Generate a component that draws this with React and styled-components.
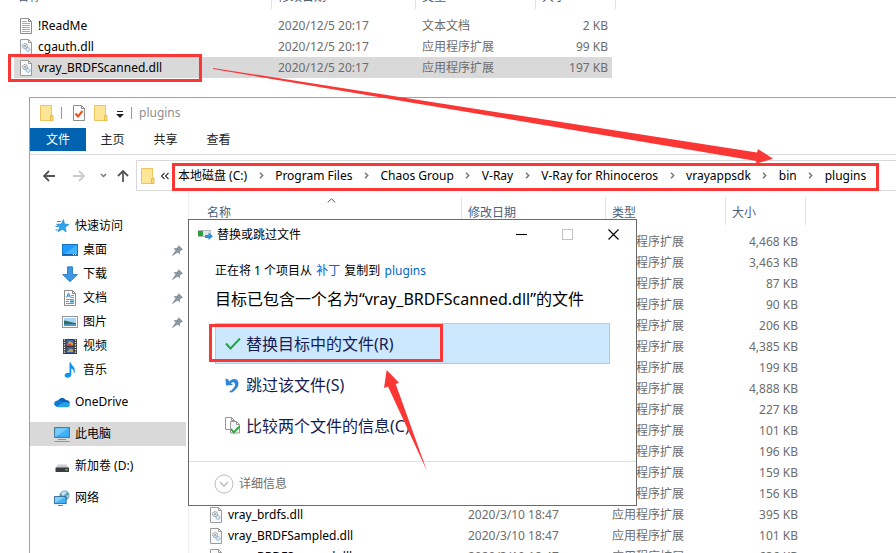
import React from 'react';
import styled, { createGlobalStyle, css } from 'styled-components';

const RED = '#fb3735';

const GlobalStyle = createGlobalStyle`
  * { box-sizing: border-box; }
  body {
    margin: 0;
    background: #fff;
    color: #000;
    font: 12px/20px "Noto Sans", "Noto Sans CJK SC", sans-serif;
  }
  button {
    padding: 0;
    border: 0;
    background: none;
    color: inherit;
    font: inherit;
    text-align: left;
    white-space: nowrap;
  }
  a { text-decoration: none; }
  svg { display: block; flex: none; }
`;

const Desktop = styled.div`
  position: relative;
  height: 100vh;
  overflow: hidden;
`;

/* ---------- icons ---------- */

const FolderIcon = () => (
  <svg width="14" height="16" viewBox="0 0 14 16">
    <path d="M.5.5h11v15H.5z" fill="#ffe596" stroke="#ecc65c" />
    <path d="M10.500 10.500h2.500v5h-2.500z" fill="#ffdb78" stroke="#e6ba48" />
  </svg>
);

const TextFileIcon = () => (
  <svg width="12" height="16" viewBox="0 0 12 16">
    <path d="M.5.5h8l3 3v12H.5z" fill="#fff" stroke="#8d8d8d" />
    <path d="M8.500.5v3h3" fill="none" stroke="#8d8d8d" />
    <path d="M2 3.500h5M2 5.500h8M2 7.500h8M2 9.500h8M2 11.500h8M2 13.500h8" stroke="#a9a9a9" />
  </svg>
);

const DllIcon = () => (
  <svg width="12" height="16" viewBox="0 0 12 16">
    <path d="M.5.5h8l3 3v12H.5z" fill="#fafafa" stroke="#9a9a9a" />
    <path d="M8.500.5v3h3" fill="none" stroke="#9a9a9a" />
    <circle cx="5" cy="7" r="2.500" fill="#dfe3e6" stroke="#87919a" strokeDasharray="1.500 .6" />
    <circle cx="5" cy="7" r=".8" fill="#6d7880" />
    <circle cx="8" cy="10.500" r="2" fill="#d4e8f5" stroke="#7fa9c6" strokeDasharray="1.300 .5" />
  </svg>
);

const PropertiesIcon = () => (
  <svg width="13" height="16" viewBox="0 0 13 16">
    <path d="M.5.5h8l3 3v12H.5z" fill="#fbfbfb" stroke="#8d8d8d" />
    <path d="M8.500.5v3h3" fill="none" stroke="#8d8d8d" />
    <path d="M2.500 8.500l2.500 3L9.500 6" fill="none" stroke="#e8501e" strokeWidth="2" />
  </svg>
);

const CustomizeIcon = () => (
  <svg width="8" height="9" viewBox="0 0 8 9">
    <path d="M1 2.500h6" stroke="#222" />
    <path d="M0 5h8L4 9z" fill="#222" />
  </svg>
);

const ArrowIcon = ({ d, color }) => (
  <svg width="14" height="14" viewBox="0 0 14 14">
    <path d={d} fill="none" stroke={color} strokeWidth="1.800" />
  </svg>
);

const SmallChevron = ({ down }) => (
  <svg width="7" height="7" viewBox="0 0 7 7">
    <path d={down ? 'M1 2l2.500 2.500L6 2' : 'M2 .8l2.700 2.700L2 6.200'} fill="none" stroke="#777" strokeWidth="1.500" />
  </svg>
);

const DoubleChevron = () => (
  <svg width="8" height="8" viewBox="0 0 8 8">
    <path d="M3.500 1l-3 3 3 3M7.500 1l-3 3 3 3" fill="none" stroke="#333" strokeWidth="1.100" />
  </svg>
);

const SortCaret = () => (
  <svg width="9" height="5" viewBox="0 0 9 5">
    <path d="M.7 4.500l3.800-3.700 3.800 3.700" fill="none" stroke="#555" />
  </svg>
);

const PinIcon = () => (
  <svg width="11" height="11" viewBox="0 0 11 11">
    <path d="M6.500 0L11 4.500 9.600 5 8 6.600 8 9.500 5.600 7.500.5 11 0 10.500 3.500 5.500 1.500 3.300 4.500 3 6.300 1.400z" fill="#8c969f" />
  </svg>
);

const sideIcons = {
  star: (
    <>
      <path d="M9.500 1.500l1 4.500 4.500.5-3.800 2.700 1 4.800-3.800-2.700-4.300 2.500 1.600-4.600L2.500 6.300l4.800-.3z" fill="#2ea3ee" stroke="#1581cc" strokeWidth=".6" />
      <path d="M3 3.500h4M1.500 8.500h3M1.500 12h3" stroke="#2b93dc" />
    </>
  ),
  desktop: (
    <>
      <rect x=".5" y="2.500" width="15" height="11" fill="#1e9bfb" stroke="#1374c4" />
      <path d="M1 13L15 3v10z" fill="#43b3ff" />
      <path d="M1 12.500h14" stroke="#0f5fa6" />
      <path d="M11 12.500h3" stroke="#fff" strokeDasharray="1 1" />
    </>
  ),
  download: <path d="M5.500.8h5v7.700h5L8 15.700.6 8.500h4.900z" fill="#3b97e6" stroke="#2273bd" strokeWidth=".8" />,
  document: (
    <>
      <path d="M2.500.5h8l3 3v12h-11z" fill="#fff" stroke="#8b8b8b" />
      <path d="M10.500.5v3h3" fill="none" stroke="#8b8b8b" />
      <path d="M4.500 7.500l2-4.500 2 4.500M5 6h3" fill="none" stroke="#2884cf" />
      <path d="M9 5.500h3M9 7.500h3M4 9.500h8M4 11.500h3M4 13.500h8" stroke="#7f96aa" />
      <path d="M8 10.500h4v2H8z" fill="#2a91bd" />
    </>
  ),
  picture: (
    <>
      <rect x=".5" y="2.500" width="15" height="11" fill="#fff" stroke="#8f979d" />
      <rect x="2" y="4" width="12" height="8" fill="#a9d7f5" />
      <path d="M2 6.500c4 0 7 2.500 12 2.500v3H2z" fill="#2f6f63" />
      <path d="M2 10h12v2H2z" fill="#4f92c8" />
    </>
  ),
  video: (
    <>
      <rect x="1" y="1" width="14" height="15" fill="#3a3a3a" />
      <path d="M2.500 1.500v14M13.500 1.500v14" stroke="#eee" strokeWidth="1.400" strokeDasharray="1.200 1.200" />
      <rect x="4.500" y="2" width="7" height="6" fill="#4169b8" />
      <rect x="4.500" y="9" width="7" height="6" fill="#3b5ea8" />
      <path d="M5 7l2.500-4L11 5v2z" fill="#d8a13a" />
      <path d="M6 6.500h3" stroke="#d3413a" strokeWidth="1.500" />
      <path d="M5 14l3-3.500 3 1V14z" fill="#b7a14a" />
    </>
  ),
  music: (
    <path d="M7.500.5h1.300c.3 3 4.700 4.200 4 9-.2 1.200-.9 2-1.300 2.300.9-2.900-.3-4.600-2.200-5.300v6c0 2-1.800 3.200-3.700 3.200-1.700 0-3-.8-3-2.200 0-1.800 2.200-3.200 4.900-2.600z" fill="#0f94ee" />
  ),
  cloud: (
    <>
      <path d="M3.500 9.500C3 5 8.500 1.500 12 6c2 0 3.500 1 4 3l-5 3z" fill="#0a63b6" />
      <path d="M3.300 6.500c3-1 5.700.5 8.700 3L4 13C-1 12.500-1 7.500 3.300 6.500z" fill="#1178cc" />
      <path d="M2 12.500l7.500-4c1.500-.8 3-.8 4.500 0 2.700 1.200 2.500 4.800-.8 4.800H4c-1 0-1.500-.3-2-.8z" fill="#27a3ea" />
    </>
  ),
  computer: (
    <>
      <rect x=".6" y="1.600" width="14.800" height="9.800" fill="#3fb1f7" stroke="#3f7595" />
      <path d="M1.200 11V2.200h13z" fill="#77cbfb" />
      <path d="M4 13.500h8M.5 15.500h15" stroke="#7d9cb3" />
    </>
  ),
  drive: (
    <>
      <path d="M4 6.500h8.500l2 3.500h-13z" fill="#c9cccf" />
      <rect x="1.500" y="9.500" width="13.500" height="4.500" rx=".6" fill="#3a3d40" />
      <rect x="11.500" y="11" width="2" height="1.400" fill="#47e05e" />
    </>
  ),
  network: (
    <>
      <circle cx="10.500" cy="5.500" r="5" fill="#5d9fbd" />
      <path d="M7 3c2-2.500 5-2 6 0l-2 1-1 2-2-1zM12 6l3-1-1 3z" fill="#c5e2ec" />
      <rect x=".6" y="6.600" width="11.500" height="7" fill="#45b4f6" stroke="#336f94" />
      <path d="M1 13V7h10z" fill="#84d0fb" />
      <path d="M4 15.500h5" stroke="#6d8799" />
    </>
  ),
};

const SideIcon = ({ name }) => (
  <svg width="16" height="16" viewBox="0 0 16 16">{sideIcons[name]}</svg>
);

const CopyProgressIcon = () => (
  <svg width="15" height="11" viewBox="0 0 15 11">
    <rect x=".5" y="1.500" width="12" height="6" fill="#e3e6e8" stroke="#b5b9bc" />
    <rect x="0" y="2" width="5" height="5" fill="#23a53a" />
    <path d="M7 6h3.500V3.500L15 7.300 10.500 11V9H7z" fill="#2b8ede" />
  </svg>
);

const CheckIcon = () => (
  <svg width="16" height="14" viewBox="0 0 16 14">
    <path d="M1 6.500l4.500 5L15 1.500" fill="none" stroke="#22a83a" strokeWidth="2" />
  </svg>
);

const UndoIcon = () => (
  <svg width="16" height="16" viewBox="0 0 16 16">
    <path d="M.5 1.500l2.500.8 1.200 2.200C7 .8 13.500.8 13.500 6.500c0 4-3 6.500-6.500 9l-3.200-.5c4-2.500 6.200-4.800 6.200-7.500 0-2.800-2.700-2.900-4-1.200l2.200 1.700L1 8.500z" fill="#3086d6" />
  </svg>
);

const CompareIcon = () => (
  <svg width="16" height="17" viewBox="0 0 16 17">
    <path d="M.5.5h6l3 3v9h-9z" fill="#fff" stroke="#999" />
    <path d="M6.500.5v3h3" fill="none" stroke="#999" />
    <path d="M5.500 4.500h6l3 3v8.500h-9z" fill="#f4f4f4" stroke="#999" />
    <path d="M11.500 4.500v3h3" fill="none" stroke="#999" />
    <path d="M6 12l2.800 3.300L14.500 9.500" fill="none" stroke="#22a83a" strokeWidth="1.800" />
  </svg>
);

const DetailsIcon = () => (
  <svg width="20" height="20" viewBox="0 0 20 20">
    <circle cx="10" cy="10" r="9" fill="#fff" stroke="#bdbdbd" />
    <path d="M6 8l4 4 4-4" fill="none" stroke="#bdbdbd" strokeWidth="1.600" />
  </svg>
);

const CaptionIcon = ({ d, color }) => (
  <svg width="11" height="11" viewBox="0 0 11 11">
    <path d={d} fill="none" stroke={color} strokeWidth="1.100" />
  </svg>
);

/* ---------- file table ---------- */

const Table = styled.table`
  table-layout: fixed;
  width: 602px;
  border-spacing: 0;
  white-space: nowrap;

  tbody::before {
    content: "";
    display: block;
    height: 6px;
  }
`;

const Col = styled.col`
  width: ${(p) => p.$width}px;
`;

const HeadCell = styled.th`
  position: relative;
  height: 28px;
  padding: 3px 0 0 ${(p) => (p.$first ? 3 : 6)}px;
  border-right: 1px solid #e3e3e3;
  color: #4c607a;
  font-weight: 400;
  text-align: left;
`;

const CaretSlot = styled.span`
  position: absolute;
  top: 1px;
  left: 48%;
`;

const Cell = styled.td`
  height: 21px;
  padding: 0 4px 0 6px;
  line-height: 20px;
  color: ${(p) => (p.$name ? '#000' : '#6d6d6d')};
  text-align: ${(p) => (p.$size ? 'right' : 'left')};
  background-clip: padding-box;
  ${(p) => p.$size && css`border-right: 4px solid transparent;`}
  ${(p) => p.$selected && css`background-color: #d9d9d9;`}
`;

const FileName = styled.span`
  display: flex;
  align-items: center;
  gap: 6px;
`;

function FileTable({ rows, sorted }) {
  return (
    <Table>
      <colgroup>
        <Col $width={258} />
        <Col $width={144} />
        <Col $width={120} />
        <Col $width={80} />
      </colgroup>
      <thead>
        <tr>
          <HeadCell $first>
            名称
            {sorted && <CaretSlot><SortCaret /></CaretSlot>}
          </HeadCell>
          <HeadCell>修改日期</HeadCell>
          <HeadCell>类型</HeadCell>
          <HeadCell>大小</HeadCell>
        </tr>
      </thead>
      <tbody>
        {rows.map((r, i) => (
          <tr key={i}>
            <Cell $name $selected={r.selected}>
              {r.name && (
                <FileName>
                  {r.text ? <TextFileIcon /> : <DllIcon />}
                  {r.name}
                </FileName>
              )}
            </Cell>
            <Cell $selected={r.selected}>{r.date}</Cell>
            <Cell $selected={r.selected}>{r.text ? '文本文档' : '应用程序扩展'}</Cell>
            <Cell $size $selected={r.selected}>{r.size} KB</Cell>
          </tr>
        ))}
      </tbody>
    </Table>
  );
}

/* ---------- source folder window ---------- */

const SourceWindow = styled.section`
  margin-top: -19px;
  padding: 0 0 19px 14px;
`;

const sourceRows = [
  { name: '!ReadMe', date: '2020/12/5 20:17', size: '2', text: true },
  { name: 'cgauth.dll', date: '2020/12/5 20:17', size: '99' },
  { name: 'vray_BRDFScanned.dll', date: '2020/12/5 20:17', size: '197', selected: true },
];

/* ---------- explorer window ---------- */

const Explorer = styled.section`
  margin-left: 29px;
  border: solid #a0a0a0;
  border-width: 1px 0 0 1px;
  background: #fff;
`;

const TitleBar = styled.header`
  display: flex;
  align-items: center;
  height: 30px;
  padding-left: 10px;
  gap: 7px;
  color: #8f8f8f;
`;

const Separator = styled.i`
  width: 1px;
  height: 12px;
  background: #999;
`;

const QuickTools = styled.div`
  display: flex;
  align-items: center;
  gap: 8px;
  padding-left: 4px;
`;

const Ribbon = styled.nav`
  display: flex;
  height: 27px;
  padding-bottom: 3px;
  border-bottom: 1px solid #dadada;
`;

const Tab = styled.button`
  width: ${(p) => (p.$file ? 56 : 53)}px;
  height: 23px;
  text-align: center;
  line-height: 24px;
  color: ${(p) => (p.$file ? '#fff' : '#222')};
  background: ${(p) => (p.$file ? '#0063b1' : 'none')};
`;

const AddressRow = styled.div`
  display: flex;
  align-items: center;
  padding-top: 5px;
`;

const NavButtons = styled.div`
  display: flex;
  align-items: center;
  width: 106px;
  padding-left: 12px;
`;

const NavButton = styled.button`
  display: flex;
  width: ${(p) => p.$width}px;
`;

const AddressBox = styled.div`
  display: flex;
  flex: 1;
  align-items: center;
  height: 31px;
  padding-left: 4px;
  border: solid #d9d9d9;
  border-width: 1px 0 1px 1px;
`;

const Overflow = styled.button`
  margin: 0 9px 0 6px;
`;

const Crumbs = styled.ol`
  display: flex;
  margin: 0;
  padding: 0;
  list-style: none;
`;

const Crumb = styled.li`
  display: flex;
  align-items: center;
`;

const CrumbGap = styled.span`
  display: flex;
  justify-content: center;
  width: 28px;
`;

const crumbs = ['本地磁盘 (C:)', 'Program Files', 'Chaos Group', 'V-Ray', 'V-Ray for Rhinoceros', 'vrayappsdk', 'bin', 'plugins'];

const Body = styled.div`
  display: flex;
`;

const Sidebar = styled.nav`
  display: flex;
  flex: none;
  flex-direction: column;
  gap: 8px;
  width: 159px;
  padding: 23px 2px 0 0;
  border-right: 1px solid #f0f0f0;
`;

const SideGroup = styled.div`
  display: flex;
  flex-direction: column;
`;

const SideItem = styled.a`
  display: flex;
  align-items: center;
  gap: 5px;
  height: 24px;
  padding: 0 3px 0 ${(p) => (p.$nested ? 32 : 24)}px;
  color: #000;
  background: ${(p) => (p.$active ? '#d9d9d9' : 'none')};
`;

const SideLabel = styled.span`
  flex: 1;
`;

const sideGroups = [
  [
    { icon: 'star', label: '快速访问' },
    { icon: 'desktop', label: '桌面', nested: true, pinned: true },
    { icon: 'download', label: '下载', nested: true, pinned: true },
    { icon: 'document', label: '文档', nested: true, pinned: true },
    { icon: 'picture', label: '图片', nested: true, pinned: true },
    { icon: 'video', label: '视频', nested: true },
    { icon: 'music', label: '音乐', nested: true },
  ],
  [{ icon: 'cloud', label: 'OneDrive' }],
  [{ icon: 'computer', label: '此电脑', active: true }],
  [{ icon: 'drive', label: '新加卷 (D:)' }],
  [{ icon: 'network', label: '网络' }],
];

const FilePane = styled.main`
  flex: 1;
  min-width: 0;
  padding: 6px 0 0 15px;
`;

const pluginSizes = ['4,468', '3,463', '87', '90', '206', '4,385', '199', '4,888', '227', '101', '196', '159', '156'];

const pluginRows = [
  ...pluginSizes.map((size) => ({ size })),
  { name: 'vray_brdfs.dll', date: '2020/3/10 18:47', size: '395' },
  { name: 'vray_BRDFSampled.dll', date: '2020/3/10 18:47', size: '101' },
  { name: 'vray_BRDFScanned.dll', date: '2020/3/10 18:47', size: '636' },
];

/* ---------- replace dialog ---------- */

const Dialog = styled.section`
  position: absolute;
  top: 219px;
  left: 188px;
  width: 449px;
  border: 1px solid #6b6b6b;
  background: #fff;
`;

const DialogTitle = styled.header`
  display: flex;
  align-items: center;
  gap: 4px;
  height: 29px;
  padding-left: 9px;
`;

const DialogName = styled.span`
  flex: 1;
`;

const CaptionButtons = styled.div`
  display: flex;
`;

const CaptionButton = styled.button`
  display: flex;
  align-items: center;
  justify-content: center;
  width: 46px;
  height: 29px;
`;

const DialogBody = styled.div`
  padding: 12px 26px 15px;
`;

const Summary = styled.p`
  margin: 0;
`;

const Link = styled.a`
  margin: 0 1px;
  color: #0066cc;
`;

const Heading = styled.h1`
  margin: 5px 0 11px;
  font-size: 16px;
  font-weight: 400;
  line-height: 26px;
  white-space: nowrap;
`;

const Choice = styled.button`
  display: flex;
  align-items: center;
  gap: 5px;
  width: 100%;
  height: 41px;
  padding-left: 9px;
  border: 1px solid ${(p) => (p.$selected ? '#99d1ff' : 'transparent')};
  background: ${(p) => (p.$selected ? '#cce8ff' : 'none')};
  color: #151c55;
  font-size: 16px;
`;

const DialogFooter = styled.footer`
  padding: 12px 25px 11px;
  border-top: 1px solid #dfdfdf;
`;

const DetailsButton = styled.button`
  display: flex;
  align-items: center;
  gap: 5px;
  color: #6d6d6d;
`;

/* ---------- annotations ---------- */

const Highlight = styled.div`
  position: absolute;
  top: ${(p) => p.$top}px;
  left: ${(p) => p.$left}px;
  width: ${(p) => p.$width}px;
  height: ${(p) => p.$height}px;
  border: 3px solid ${RED};
  pointer-events: none;
`;

const Arrows = styled.svg`
  position: absolute;
  top: 0;
  left: 0;
  pointer-events: none;
`;

export default function App() {
  return (
    <Desktop>
      <GlobalStyle />
      <SourceWindow>
        <FileTable rows={sourceRows} />
      </SourceWindow>

      <Explorer>
        <TitleBar>
          <FolderIcon />
          <Separator />
          <QuickTools>
            <PropertiesIcon />
            <FolderIcon />
            <CustomizeIcon />
          </QuickTools>
          <Separator />
          plugins
        </TitleBar>
        <Ribbon>
          <Tab $file>文件</Tab>
          <Tab>主页</Tab>
          <Tab>共享</Tab>
          <Tab>查看</Tab>
        </Ribbon>
        <AddressRow>
          <NavButtons>
            <NavButton $width={30} aria-label="后退"><ArrowIcon color="#555" d="M13 7H2M7 2L2 7l5 5" /></NavButton>
            <NavButton $width={28} aria-label="前进"><ArrowIcon color="#ccc" d="M1 7h11M7 2l5 5-5 5" /></NavButton>
            <NavButton $width={16} aria-label="历史"><SmallChevron down /></NavButton>
            <NavButton $width={14} aria-label="向上"><ArrowIcon color="#555" d="M7 13V2M2 7l5-5 5 5" /></NavButton>
          </NavButtons>
          <AddressBox>
            <FolderIcon />
            <Overflow aria-label="更多"><DoubleChevron /></Overflow>
            <Crumbs>
              {crumbs.map((c, i) => (
                <Crumb key={c}>
                  {i > 0 && <CrumbGap><SmallChevron /></CrumbGap>}
                  <button>{c}</button>
                </Crumb>
              ))}
            </Crumbs>
          </AddressBox>
        </AddressRow>
        <Body>
          <Sidebar>
            {sideGroups.map((group) => (
              <SideGroup key={group[0].label}>
                {group.map((item) => (
                  <SideItem key={item.label} href="#" $nested={item.nested} $active={item.active}>
                    <SideIcon name={item.icon} />
                    <SideLabel>{item.label}</SideLabel>
                    {item.pinned && <PinIcon />}
                  </SideItem>
                ))}
              </SideGroup>
            ))}
          </Sidebar>
          <FilePane>
            <FileTable rows={pluginRows} sorted />
          </FilePane>
        </Body>
      </Explorer>

      <Dialog role="dialog" aria-labelledby="dialog-name">
        <DialogTitle>
          <CopyProgressIcon />
          <DialogName id="dialog-name">替换或跳过文件</DialogName>
          <CaptionButtons>
            <CaptionButton aria-label="最小化"><CaptionIcon color="#000" d="M0 5.500h11" /></CaptionButton>
            <CaptionButton aria-label="最大化" disabled><CaptionIcon color="#c4c4c4" d="M.5.5h10v10H.5z" /></CaptionButton>
            <CaptionButton aria-label="关闭"><CaptionIcon color="#000" d="M.5.5l10 10M10.500.5l-10 10" /></CaptionButton>
          </CaptionButtons>
        </DialogTitle>
        <DialogBody>
          <Summary>
            正在将 1 个项目从 <Link href="#">补丁</Link> 复制到 <Link href="#">plugins</Link>
          </Summary>
          <Heading>目标已包含一个名为“vray_BRDFScanned.dll”的文件</Heading>
          <Choice $selected><CheckIcon />替换目标中的文件(R)</Choice>
          <Choice><UndoIcon />跳过该文件(S)</Choice>
          <Choice><CompareIcon />比较两个文件的信息(C)</Choice>
        </DialogBody>
        <DialogFooter>
          <DetailsButton><DetailsIcon />详细信息</DetailsButton>
        </DialogFooter>
      </Dialog>

      <Highlight $left={8} $top={54} $width={194} $height={28} />
      <Highlight $left={172} $top={163} $width={707} $height={28} />
      <Highlight $left={209} $top={324} $width={234} $height={38} />
      <Arrows width="896" height="553" viewBox="0 0 896 553" aria-hidden="true">
        <path d="M213 68L757 152.500l1-3.500 15 9.700-17 5 .3-2.700L213 69z" fill={RED} />
        <path d="M427 471L388 386.500l-4 1.500 2.700-18L399 382.700l-3.300 1.300z" fill={RED} />
      </Arrows>
    </Desktop>
  );
}
